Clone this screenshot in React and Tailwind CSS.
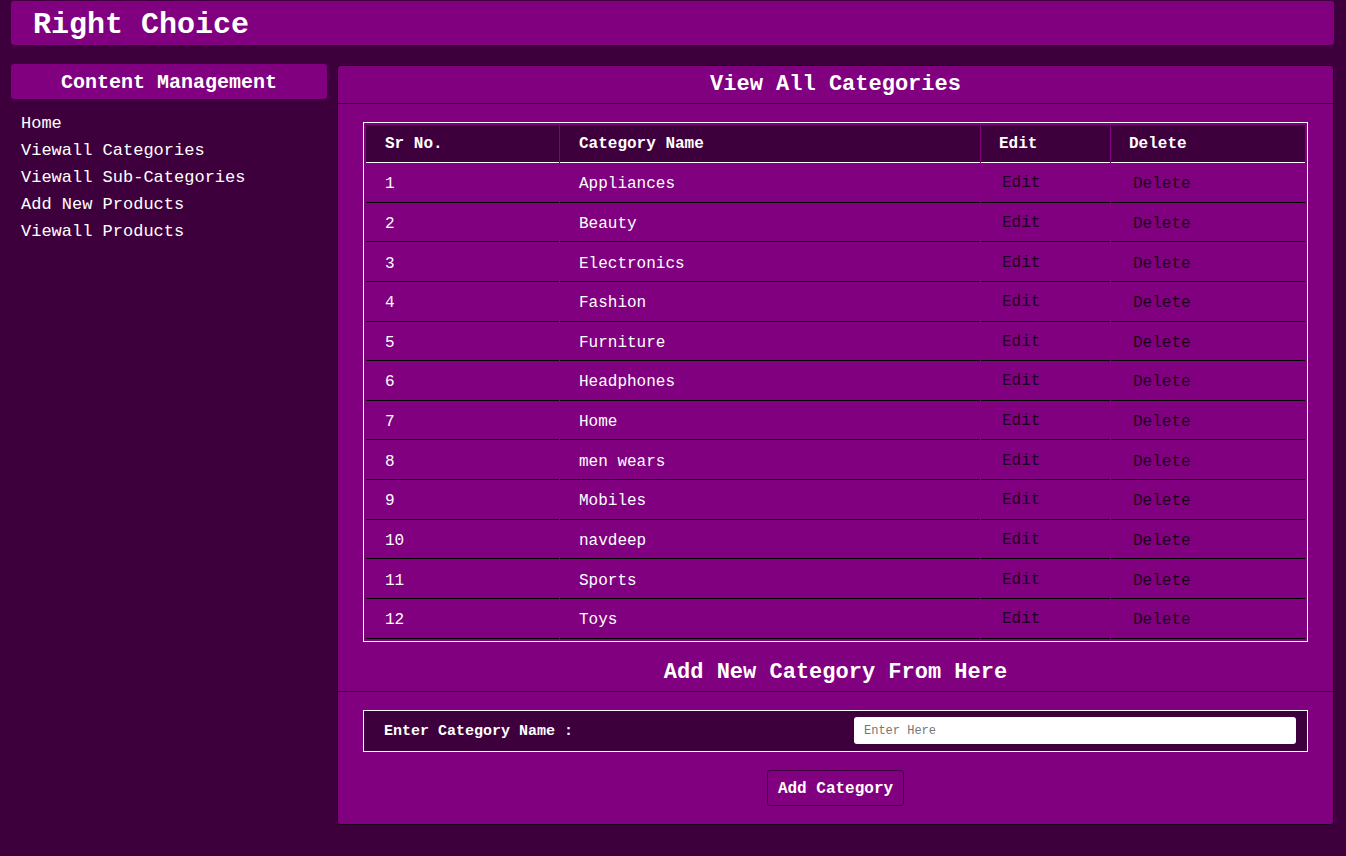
import React from "react";

const categories = [
  "Appliances",
  "Beauty",
  "Electronics",
  "Fashion",
  "Furniture",
  "Headphones",
  "Home",
  "men wears",
  "Mobiles",
  "navdeep",
  "Sports",
  "Toys",
];

const links = [
  "Home",
  "Viewall Categories",
  "Viewall Sub-Categories",
  "Add New Products",
  "Viewall Products",
];

export default function App() {
  return (
    <div
      className="min-h-screen bg-[#3d003d] text-white pl-[11px] pr-[12px] pt-[1px]"
      style={{ fontFamily: '"Liberation Mono", "Courier New", monospace' }}
    >
      {/* Top bar */}
      <header className="h-[44px] bg-[#800080] rounded-[3px] flex items-center pl-[22px] pt-[4px]">
        <h1 className="text-[30px] font-bold leading-none">Right Choice</h1>
      </header>

      <div className="flex items-start gap-[10px] mt-[19px]">
        {/* Sidebar */}
        <aside className="w-[316px] shrink-0">
          <div className="h-[35px] bg-[#800080] rounded-[3px] flex items-center justify-center pt-[2px]">
            <h2 className="text-[20px] font-bold leading-none">Content Management</h2>
          </div>
          <ul className="mt-[11px] pl-[10px] text-[17px] leading-[27px]">
            {links.map((l) => (
              <li key={l}>
                <a href="#" className="text-white">{l}</a>
              </li>
            ))}
          </ul>
        </aside>

        {/* Main panel */}
        <main className="flex-1 mt-[1px] bg-[#800080] border border-[#1c001c] rounded-[3px]">
          <div className="h-[38px] flex items-center justify-center border-b border-[#2e002e]">
            <h2 className="text-[22px] font-bold leading-none">View All Categories</h2>
          </div>

          <div className="px-[25px] pt-[18px]">
            <div className="border border-white p-[1px]">
              <table className="w-full table-fixed border-separate border-spacing-[1px] text-[16px]">
                <thead>
                  <tr className="bg-[#3d003d]">
                    <th className="w-[193px] h-[38px] text-left pl-[19px] pt-[1px] font-bold border-b border-white">Sr No.</th>
                    <th className="w-[420px] text-left pl-[19px] pt-[1px] font-bold border-b border-white">Category Name</th>
                    <th className="w-[129px] text-left pl-[18px] pt-[1px] font-bold border-b border-white">Edit</th>
                    <th className="text-left pl-[18px] pt-[1px] font-bold border-b border-white">Delete</th>
                  </tr>
                </thead>
                <tbody>
                  {categories.map((c, i) => (
                    <tr key={c}>
                      <td className="h-[38.64px] pl-[19px] pt-[3px] border-b border-black">{i + 1}</td>
                      <td className="pl-[19px] pt-[3px] border-b border-black">{c}</td>
                      <td className="pl-[21px] pt-[3px] border-b border-black">
                        <a href="#" className="text-[#1e001e] relative -top-[1px]">Edit</a>
                      </td>
                      <td className="pl-[22px] pt-[3px] border-b border-black">
                        <a href="#" className="text-[#1e001e]">Delete</a>
                      </td>
                    </tr>
                  ))}
                </tbody>
              </table>
            </div>
          </div>

          <div className="mt-[12px] h-[38px] flex items-center justify-center border-b border-[#2e002e] pt-[2px]">
            <h2 className="text-[22px] font-bold leading-none">Add New Category From Here</h2>
          </div>

          <div className="px-[25px] pt-[18px]">
            <div className="h-[42px] border border-white bg-[#3d003d] flex items-center justify-between pl-[20px] pr-[11px]">
              <label className="text-[15px] font-bold pt-[4px]">Enter Category Name :</label>
              <input
                type="text"
                placeholder="Enter Here"
                className="w-[442px] h-[27px] bg-white rounded-[3px] pl-[10px] text-[12px] text-black placeholder:text-[#757575] outline-none"
              />
            </div>
          </div>

          <div className="flex justify-center pt-[18px] pb-[18px]">
            <button className="h-[36px] px-[10px] pt-[2px] border border-[#3d003d] rounded-[3px] bg-[#800080] text-white text-[16px] font-bold">
              Add Category
            </button>
          </div>
        </main>
      </div>
    </div>
  );
}
